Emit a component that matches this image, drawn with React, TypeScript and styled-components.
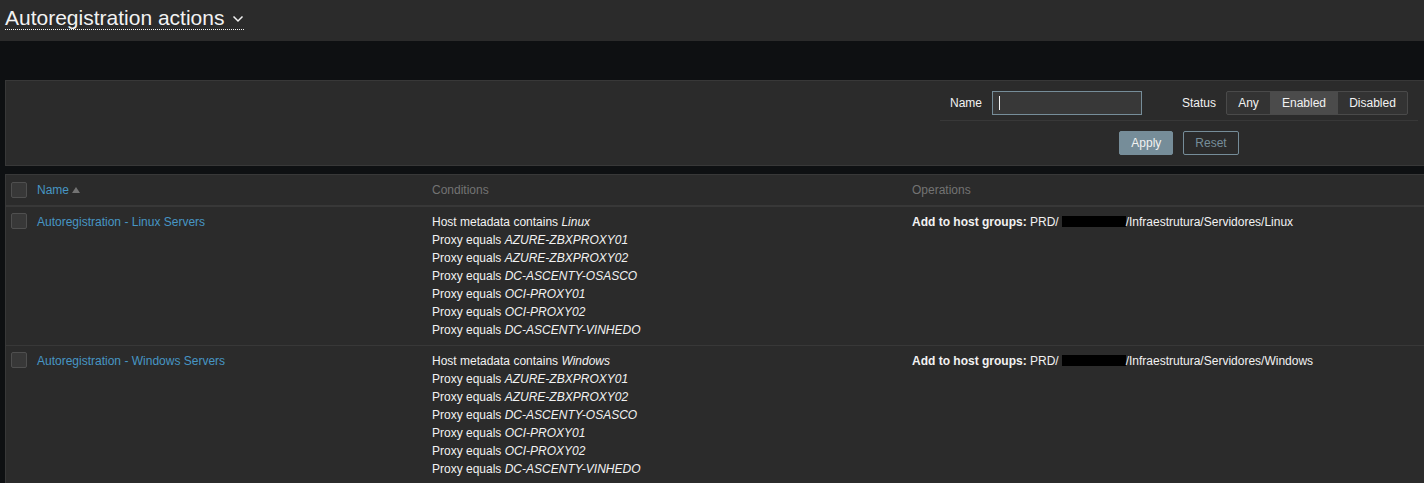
import React from 'react';
import styled, { createGlobalStyle } from 'styled-components';

const Global = createGlobalStyle`
  html, body { margin: 0; padding: 0; background: #0e1012; }
  body {
    font-family: "Liberation Sans", Arial, sans-serif;
    font-size: 12px;
    color: #f2f2f2;
    overflow: hidden;
  }
`;

const Header = styled.header`
  height: 41px;
  box-sizing: border-box;
  background: #2b2b2b;
  padding: 6px 5px 0;
`;

const TitleButton = styled.h1`
  margin: 0;
  display: inline-flex;
  align-items: center;
  gap: 8px;
  font-size: 21px;
  font-weight: normal;
  line-height: 23px;
  color: #f2f2f2;
  border-bottom: 1px dotted #f2f2f2;
  cursor: pointer;
`;

const Main = styled.main`
  padding: 39px 0 0 5px;
`;

const FilterPanel = styled.section`
  background: #2b2b2b;
  border: 1px solid #383838;
  border-right: none;
  padding: 10px 0;
`;

const FilterBox = styled.div`
  width: 478px;
  margin-left: auto;
  margin-right: 6px;
`;

const FilterRow = styled.div`
  display: flex;
  align-items: center;
  height: 24px;
  padding: 0 10px;
`;

const Label = styled.label<{ $gapLeft?: number }>`
  margin-left: ${p => p.$gapLeft ?? 0}px;
  margin-right: 10px;
  color: #f2f2f2;
`;

const InputBox = styled.div`
  position: relative;
  width: 150px;
  height: 24px;
  box-sizing: border-box;
  background: #383838;
  border: 1px solid #768d99;
  &::after {
    content: "";
    position: absolute;
    left: 6px;
    top: 4px;
    width: 1px;
    height: 14px;
    background: #f2f2f2;
  }
`;

const Segmented = styled.div`
  display: flex;
  height: 24px;
  box-sizing: border-box;
  border: 1px solid #4a4a4a;
  border-radius: 2px;
  background: #333333;
  overflow: hidden;
`;

const Segment = styled.span<{ $active?: boolean; $w: number }>`
  display: flex;
  align-items: center;
  justify-content: center;
  width: ${p => p.$w}px;
  background: ${p => (p.$active ? '#4b4b4b' : 'transparent')};
  color: #f2f2f2;
`;

const Divider = styled.div`
  height: 1px;
  background: #383838;
  margin: 5px 0 10px;
`;

const ButtonRow = styled.div`
  display: flex;
  justify-content: center;
  gap: 10px;
`;

const Button = styled.button<{ $primary?: boolean }>`
  height: 24px;
  padding: 0 11px;
  font-family: inherit;
  font-size: 12px;
  border: 1px solid #768d99;
  border-radius: 2px;
  background: ${p => (p.$primary ? '#768d99' : 'transparent')};
  color: ${p => (p.$primary ? '#f2f2f2' : '#768d99')};
`;

const Table = styled.section`
  margin-top: 8px;
  background: #2b2b2b;
  border-top: 1px solid #383838;
  border-left: 1px solid #383838;
`;

const Row = styled.div<{ $head?: boolean }>`
  display: grid;
  grid-template-columns: 26px 395px 480px 1fr;
  align-items: ${p => (p.$head ? 'center' : 'start')};
  height: ${p => (p.$head ? '30px' : 'auto')};
  padding: ${p => (p.$head ? '0' : '6px 0 6px')};
  border-bottom: ${p => (p.$head ? '2px solid #383838' : '1px solid #383838')};
  line-height: 18px;
`;

const Cell = styled.div`
  padding-left: 5px;
`;

const HeadText = styled.span`
  color: #737373;
`;

const Link = styled.a`
  color: #4796c4;
  text-decoration: none;
`;

const SortArrow = styled.span`
  display: inline-block;
  margin-left: 3px;
  width: 0;
  height: 0;
  border-left: 4px solid transparent;
  border-right: 4px solid transparent;
  border-bottom: 6px solid #737373;
  vertical-align: 1px;
`;

const Check = styled.span`
  display: block;
  width: 16px;
  height: 16px;
  box-sizing: border-box;
  border: 1px solid #4f4f4f;
  border-radius: 2px;
  background: #383838;
`;

const CheckCell = styled.div<{ $top?: number }>`
  padding: ${p => p.$top ?? 0}px 0 0 5px;
`;

const Value = styled.i``;

const Bold = styled.b``;

const Redacted = styled.span`
  display: inline-block;
  width: 64px;
  height: 11px;
  background: #000;
  vertical-align: -1px;
  margin-left: 3px;
`;

const Chevron = () => (
  <svg width="12" height="8" viewBox="0 0 12 8" style={{ marginTop: 2 }}>
    <polyline points="1.5,1.5 6,6 10.5,1.5" fill="none" stroke="#f2f2f2" strokeWidth="1.5" />
  </svg>
);

const proxies = ['AZURE-ZBXPROXY01', 'AZURE-ZBXPROXY02', 'DC-ASCENTY-OSASCO', 'OCI-PROXY01', 'OCI-PROXY02', 'DC-ASCENTY-VINHEDO'];

const actions = [
  { name: 'Autoregistration - Linux Servers', meta: 'Linux' },
  { name: 'Autoregistration - Windows Servers', meta: 'Windows' },
];

export default function App() {
  return (
    <>
      <Global />
      <Header>
        <TitleButton>
          Autoregistration actions
          <Chevron />
        </TitleButton>
      </Header>
      <Main>
        <FilterPanel>
          <FilterBox>
            <FilterRow>
              <Label>Name</Label>
              <InputBox />
              <Label $gapLeft={40}>Status</Label>
              <Segmented>
                <Segment $w={43}>Any</Segment>
                <Segment $w={68} $active>Enabled</Segment>
                <Segment $w={69}>Disabled</Segment>
              </Segmented>
            </FilterRow>
            <Divider />
            <ButtonRow>
              <Button $primary>Apply</Button>
              <Button>Reset</Button>
            </ButtonRow>
          </FilterBox>
        </FilterPanel>
        <Table>
          <Row $head>
            <CheckCell><Check /></CheckCell>
            <Cell><Link>Name</Link><SortArrow /></Cell>
            <Cell><HeadText>Conditions</HeadText></Cell>
            <Cell><HeadText>Operations</HeadText></Cell>
          </Row>
          {actions.map(a => (
            <Row key={a.name}>
              <CheckCell $top={0}><Check /></CheckCell>
              <Cell><Link>{a.name}</Link></Cell>
              <Cell>
                <div>Host metadata contains <Value>{a.meta}</Value></div>
                {proxies.map(p => (
                  <div key={p}>Proxy equals <Value>{p}</Value></div>
                ))}
              </Cell>
              <Cell>
                <Bold>Add to host groups:</Bold> PRD/<Redacted />/Infraestrutura/Servidores/{a.meta}
              </Cell>
            </Row>
          ))}
        </Table>
      </Main>
    </>
  );
}
